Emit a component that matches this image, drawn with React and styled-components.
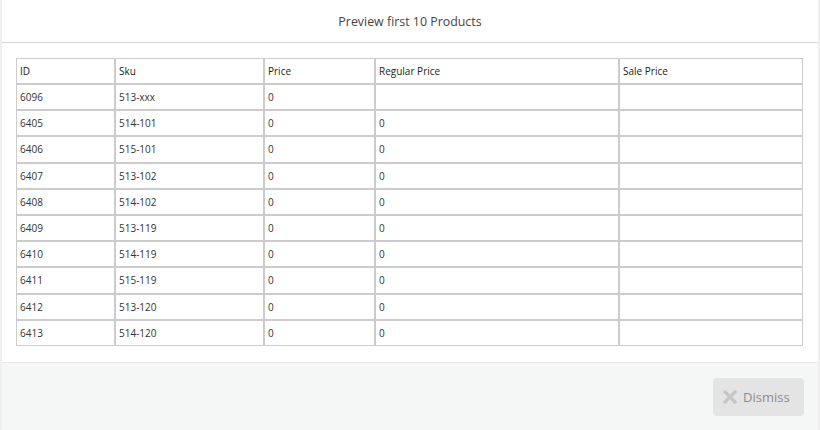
import React from "react"
import styled, { createGlobalStyle } from "styled-components"

const GlobalStyle = createGlobalStyle`
  html, body {
    margin: 0;
    padding: 0;
    background: #fff;
  }
  body {
    font-family: "Open Sans", "Liberation Sans", sans-serif;
    color: #333;
  }
`

const columns = ["ID", "Sku", "Price", "Regular Price", "Sale Price"]
const widths = [99, 149, 111, 244, 184]

const products = [
  { id: "6096", sku: "513-xxx", price: "0", regular: "", sale: "" },
  { id: "6405", sku: "514-101", price: "0", regular: "0", sale: "" },
  { id: "6406", sku: "515-101", price: "0", regular: "0", sale: "" },
  { id: "6407", sku: "513-102", price: "0", regular: "0", sale: "" },
  { id: "6408", sku: "514-102", price: "0", regular: "0", sale: "" },
  { id: "6409", sku: "513-119", price: "0", regular: "0", sale: "" },
  { id: "6410", sku: "514-119", price: "0", regular: "0", sale: "" },
  { id: "6411", sku: "515-119", price: "0", regular: "0", sale: "" },
  { id: "6412", sku: "513-120", price: "0", regular: "0", sale: "" },
  { id: "6413", sku: "514-120", price: "0", regular: "0", sale: "" },
]

const XIcon = () => (
  <svg width="14" height="14" viewBox="0 0 14 14">
    <path
      d="M2 2 L12 12 M12 2 L2 12"
      stroke="#c6c6c6"
      strokeWidth="3.2"
      strokeLinecap="square"
      fill="none"
    />
  </svg>
)

const App = () => {
  return (
    <>
      <GlobalStyle />
      <Modal>
        <Header>
          <Title>Preview first 10 Products</Title>
        </Header>
        <Body>
          <Table>
            <colgroup>
              {widths.map((w, i) => (
                <col key={i} style={{ width: w }} />
              ))}
            </colgroup>
            <thead>
              <tr>
                {columns.map(c => (
                  <HeadCell key={c}>{c}</HeadCell>
                ))}
              </tr>
            </thead>
            <tbody>
              {products.map(p => (
                <tr key={p.id}>
                  <Cell>{p.id}</Cell>
                  <Cell>{p.sku}</Cell>
                  <Cell>{p.price}</Cell>
                  <Cell>{p.regular}</Cell>
                  <Cell>{p.sale}</Cell>
                </tr>
              ))}
            </tbody>
          </Table>
        </Body>
        <Footer>
          <DismissButton>
            <XIcon />
            Dismiss
          </DismissButton>
        </Footer>
      </Modal>
    </>
  )
}

export default App

const Modal = styled.div`
  width: 820px;
  height: 430px;
  box-sizing: border-box;
  display: flex;
  flex-direction: column;
  border-left: 2px solid #efefef;
  border-right: 2px solid #efefef;
  background: #fff;
`

const Header = styled.div`
  height: 43px;
  box-sizing: border-box;
  border-bottom: 1px solid #d6d6d6;
  display: flex;
  align-items: center;
  justify-content: center;
`

const Title = styled.h4`
  margin: 0;
  font-size: 12.4px;
  font-weight: 400;
  color: #444;
  padding-top: 1px;
`

const Body = styled.div`
  padding: 15px 14px 16px 14px;
  border-bottom: 1px solid #e8e8e8;
`

const Table = styled.table`
  width: 787px;
  table-layout: fixed;
  border-collapse: separate;
  border-spacing: 0;
  font-size: 10px;
`

const HeadCell = styled.th`
  border: 1px solid #cccccc;
  height: 26px;
  padding: 0 3px;
  text-align: left;
  font-weight: 400;
  color: #222;
  box-sizing: border-box;
`

const Cell = styled.td`
  border: 1px solid #cccccc;
  height: 26.2px;
  padding: 0 3px;
  text-align: left;
  color: #333;
  box-sizing: border-box;
`

const Footer = styled.div`
  flex: 1;
  background: #f5f6f6;
  display: flex;
  align-items: flex-start;
  justify-content: flex-end;
  padding: 15px 14px 0 0;
`

const DismissButton = styled.button`
  display: flex;
  align-items: center;
  gap: 6px;
  height: 38px;
  width: 91px;
  box-sizing: border-box;
  padding: 0 0 0 10px;
  background: #e4e4e4;
  border: none;
  border-radius: 4px;
  font-family: "Open Sans", "Liberation Sans", sans-serif;
  font-size: 13px;
  color: #8c8c8c;
  cursor: default;
`
